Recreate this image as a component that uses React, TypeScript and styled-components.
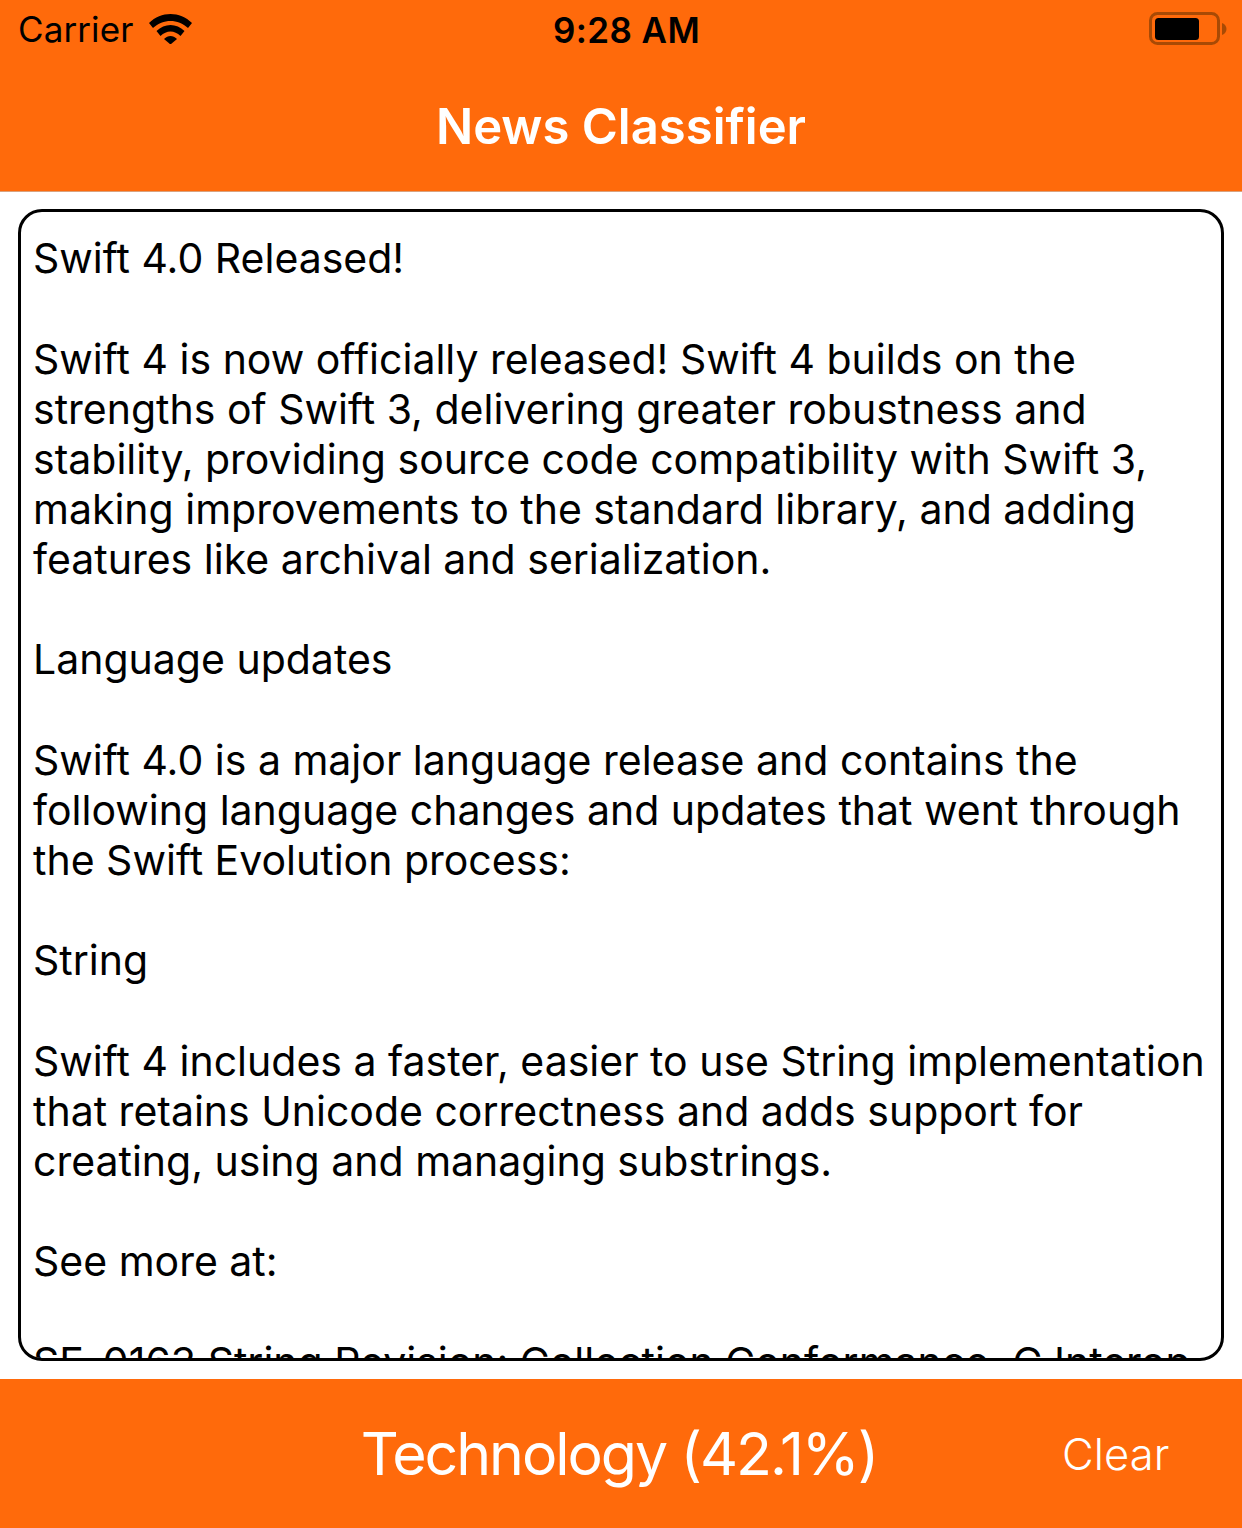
import * as React from 'react';
import styled, { createGlobalStyle } from 'styled-components';

const ORANGE = '#ff6a0b';

const article = `Swift 4.0 Released!

Swift 4 is now officially released! Swift 4 builds on the
strengths of Swift 3, delivering greater robustness and
stability, providing source code compatibility with Swift 3,
making improvements to the standard library, and adding
features like archival and serialization.

Language updates

Swift 4.0 is a major language release and contains the
following language changes and updates that went through
the Swift Evolution process:

String

Swift 4 includes a faster, easier to use String implementation
that retains Unicode correctness and adds support for
creating, using and managing substrings.

See more at:

SE-0163 String Revision: Collection Conformance, C Interop`;

const GlobalStyle = createGlobalStyle`
  html, body {
    margin: 0;
    padding: 0;
    background: #fff;
  }
  body {
    font-family: Inter, "Liberation Sans", sans-serif;
  }
`;

const Screen = styled.div`
  width: 1242px;
  height: 1528px;
  display: flex;
  flex-direction: column;
  background: #fff;
  overflow: hidden;
`;

const Header = styled.header`
  height: 191px;
  flex: none;
  background: ${ORANGE};
  border-bottom: 1px solid #d9a27e;
`;

const StatusBar = styled.div`
  height: 60px;
  display: grid;
  grid-template-columns: 1fr auto 1fr;
  align-items: center;
  padding: 0 15px 0 18px;
  color: #000;
  font-size: 35px;
`;

const StatusLeft = styled.div`
  display: flex;
  align-items: center;
  gap: 16px;
  padding-bottom: 2px;
  letter-spacing: 0.1px;
`;

const Clock = styled.div`
  font-weight: 600;
  letter-spacing: 0.4px;
  padding-left: 8px;
`;

const StatusRight = styled.div`
  display: flex;
  justify-content: flex-end;
  padding-bottom: 3px;
`;

const Title = styled.h1`
  margin: 0;
  height: 110px;
  display: flex;
  justify-content: center;
  color: #fff;
  font-size: 49px;
  font-weight: 600;
  line-height: 134px;
`;

const Body = styled.main`
  flex: 1;
  min-height: 0;
  padding: 17px 18px 18px;
  display: flex;
`;

const TextPanel = styled.div`
  flex: 1;
  box-sizing: border-box;
  border: 3px solid #000;
  border-radius: 24px;
  overflow: hidden;
  padding: 21.2px 12px 0;
  color: #000;
  font-size: 41px;
  line-height: 50.15px;
  white-space: pre-line;
`;

const Footer = styled.footer`
  height: 149px;
  flex: none;
  background: ${ORANGE};
  display: flex;
  align-items: center;
  color: #fff;
`;

const Result = styled.div`
  width: 1000px;
  padding-left: 238px;
  box-sizing: border-box;
  text-align: center;
  font-size: 59px;
  font-weight: 400;
  letter-spacing: -2.05px;
`;

const ClearButton = styled.button`
  border: 0;
  padding: 0;
  background: transparent;
  color: #fff;
  font: inherit;
  font-size: 43.5px;
  font-weight: 350;
  letter-spacing: 0.1px;
  margin-left: 62px;
`;

function WifiIcon(): JSX.Element {
  return (
    <svg width="43" height="30" viewBox="0 0 43 30">
      <path d="M0 9 C12 -3 31 -3 43 9 L39 14 C29 4.5 14 4.5 4 14 Z" fill="#000" />
      <path d="M7.5 17 C15.5 9 27.5 9 35.5 17 L31.5 22 C25.5 16 17.5 16 11.5 22 Z" fill="#000" />
      <path d="M15 25 C19 21 24 21 28 25 L21.5 30.5 Z" fill="#000" />
    </svg>
  );
}

function BatteryIcon(): JSX.Element {
  return (
    <svg width="78" height="33" viewBox="0 0 78 33">
      <rect x="1.5" y="1.5" width="68" height="30" rx="7" fill="none" stroke="#a84a05" strokeWidth="3" />
      <rect x="6" y="6" width="44" height="22" rx="3.5" fill="#000" />
      <path d="M73 11 C76 12 77.5 14.5 77.5 17 C77.5 19.5 76 22 73 23 Z" fill="#a84a05" />
    </svg>
  );
}

export default function App(): JSX.Element {
  return (
    <Screen>
      <GlobalStyle />
      <Header>
        <StatusBar>
          <StatusLeft>
            <span>Carrier</span>
            <WifiIcon />
          </StatusLeft>
          <Clock>9:28 AM</Clock>
          <StatusRight>
            <BatteryIcon />
          </StatusRight>
        </StatusBar>
        <Title>News Classifier</Title>
      </Header>
      <Body>
        <TextPanel>{article}</TextPanel>
      </Body>
      <Footer>
        <Result>Technology (42.1%)</Result>
        <ClearButton>Clear</ClearButton>
      </Footer>
    </Screen>
  );
}
